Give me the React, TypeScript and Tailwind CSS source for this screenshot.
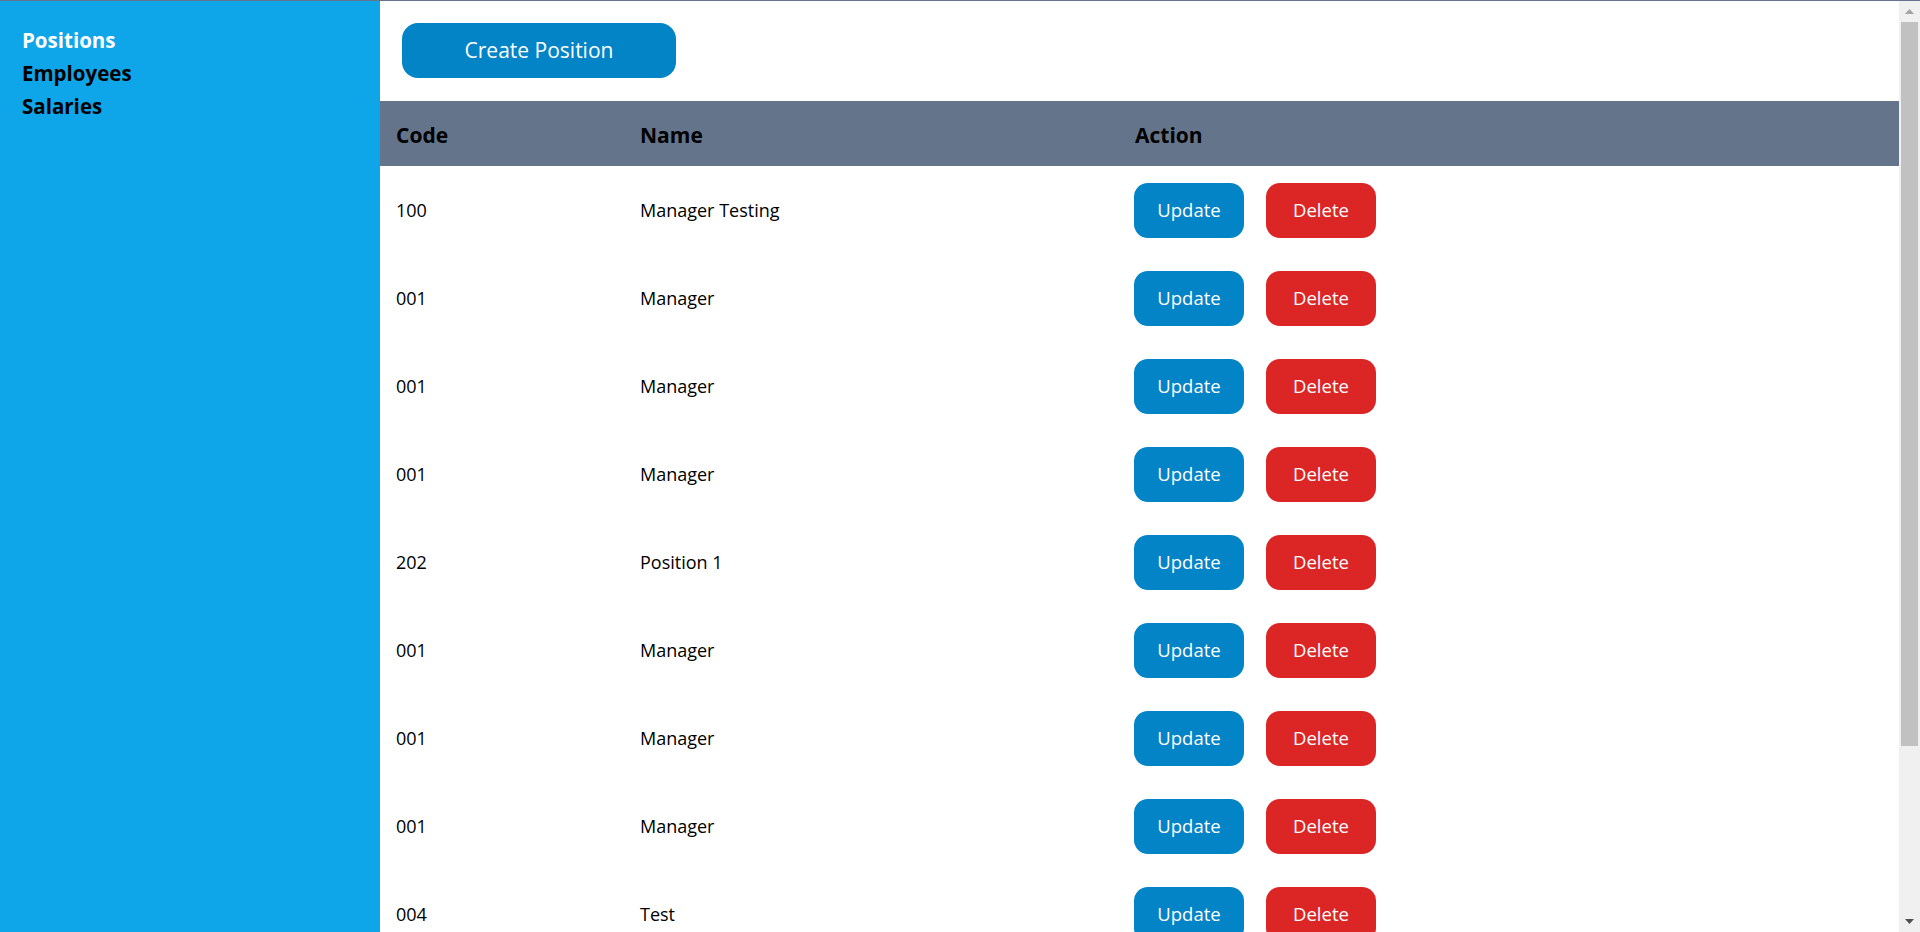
import React from 'react';

const rows = [
  { code: '100', name: 'Manager Testing' },
  { code: '001', name: 'Manager' },
  { code: '001', name: 'Manager' },
  { code: '001', name: 'Manager' },
  { code: '202', name: 'Position 1' },
  { code: '001', name: 'Manager' },
  { code: '001', name: 'Manager' },
  { code: '001', name: 'Manager' },
  { code: '004', name: 'Test' },
];

const links = ['Positions', 'Employees', 'Salaries'];

export default function App() {
  return (
    <div className="flex h-screen overflow-hidden border-t border-[#64748b] font-['Segoe_UI','Open_Sans',sans-serif] text-black">
      {/* Sidebar */}
      <aside className="w-[380px] shrink-0 bg-[#0ea5e9] px-[22px] pt-[23px]">
        <nav className="flex flex-col">
          {links.map((l, i) => (
            <a
              key={l}
              href="#"
              className={`text-[20.5px] font-bold leading-[33px] ${i === 0 ? 'text-white' : 'text-black'}`}
            >
              {l}
            </a>
          ))}
        </nav>
      </aside>

      {/* Main */}
      <main className="flex-1 min-w-0 bg-white">
        <div className="px-[22px] pt-[22px] pb-[23px]">
          <button className="w-[274px] h-[55px] rounded-[16px] bg-[#0284c7] text-white text-[21px]">
            Create Position
          </button>
        </div>
        <table className="w-full border-collapse text-left">
          <thead>
            <tr className="h-[65px] bg-[#64748b]">
              <th className="w-[244px] px-[16px] pt-[4px] text-[21px] font-bold">Code</th>
              <th className="w-[495px] px-[16px] pt-[4px] text-[21px] font-bold">Name</th>
              <th className="px-[16px] pt-[4px] text-[21px] font-bold">Action</th>
            </tr>
          </thead>
          <tbody>
            {rows.map((r, i) => (
              <tr key={i} className="h-[88px]">
                <td className="px-[16px] text-[18px]">{r.code}</td>
                <td className="px-[16px] text-[18px]">{r.name}</td>
                <td className="px-[15px]">
                  <div className="flex gap-[22px]">
                    <button className="w-[110px] h-[55px] rounded-[14px] bg-[#0284c7] text-white text-[18.5px]">
                      Update
                    </button>
                    <button className="w-[110px] h-[55px] rounded-[14px] bg-[#dc2626] text-white text-[18.5px]">
                      Delete
                    </button>
                  </div>
                </td>
              </tr>
            ))}
          </tbody>
        </table>
      </main>

      {/* Scrollbar */}
      <div className="w-[21px] shrink-0 bg-[#f0f0f0] flex flex-col items-center">
        <div className="h-[21px] flex items-center justify-center">
          <svg width="9" height="5" viewBox="0 0 9 5"><path d="M0 5 L4.5 0 L9 5 Z" fill="#a3a3a3" /></svg>
        </div>
        <div className="w-[17px] h-[724px] bg-[#c1c1c1]" />
        <div className="flex-1" />
        <div className="h-[21px] flex items-center justify-center">
          <svg width="9" height="5" viewBox="0 0 9 5"><path d="M0 0 L9 0 L4.5 5 Z" fill="#505050" /></svg>
        </div>
      </div>
    </div>
  );
}
